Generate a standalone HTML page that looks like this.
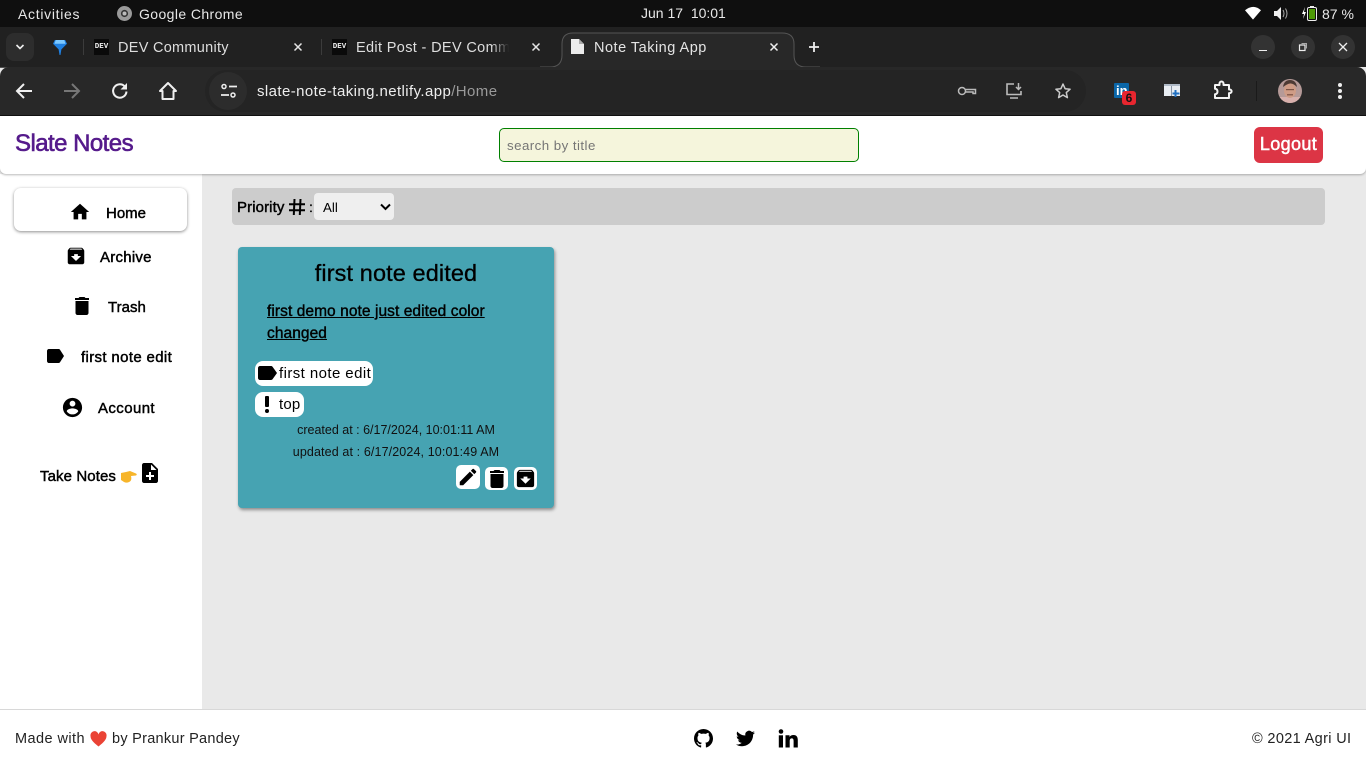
<!DOCTYPE html>
<html><head><meta charset="utf-8"><title>Note Taking App</title>
<style>
html,body{margin:0;padding:0;width:1366px;height:768px;overflow:hidden;background:#e9e9e9;font-family:"Liberation Sans",sans-serif;color:#000}
.a{position:absolute}
.t{position:absolute;white-space:nowrap}
svg{position:absolute;display:block}
.m{font-size:15px;-webkit-text-stroke:.45px #000}
.s{color:#111;font-size:12.5px}
.wb{position:absolute;background:#fff;border-radius:5px}
.tab{font-size:14.5px;color:#dedede}
.ft{font-size:14.5px;color:#222}
</style></head><body>
<!-- system bar -->
<div class="a" style="left:0;top:0;width:1366px;height:27px;background:#0f0f0f"></div>
<div class="t" style="left:18px;top:6px;font-size:14px;color:#e8e8e8;letter-spacing:.7px">Activities</div>
<svg style="left:117px;top:6px" width="15" height="15" viewBox="0 0 15 15"><circle cx="7.5" cy="7.5" r="7.5" fill="#9a9a9a"/><circle cx="7.5" cy="7.5" r="3.6" fill="#333"/><circle cx="7.5" cy="7.5" r="2" fill="#bbb"/></svg>
<div class="t" style="left:139px;top:6px;font-size:14px;color:#e8e8e8;letter-spacing:.4px">Google Chrome</div>
<div class="t" style="left:641px;top:5px;font-size:14px;color:#e8e8e8">Jun 17&nbsp; 10:01</div>
<svg style="left:1245px;top:6px" width="16" height="15" viewBox="0 0 17 15"><path d="M0 4Q9-3 17 4L8.500 14z" fill="#fff"/></svg>
<svg style="left:1273px;top:6px" width="16" height="15" viewBox="0 0 16 15"><path d="M1 5h3l4-4v13l-4-4H1z" fill="#eee"/><path d="M10 4q2 3.500 0 7M12.500 2.500q3 5 0 10" fill="none" stroke="#aaa" stroke-width="1"/></svg>
<svg style="left:1301px;top:5px" width="18" height="17" viewBox="0 0 18 17"><path d="M4 2 1 9h2l-1 5 3-7H3z" fill="#fff"/><rect x="6.500" y="2.500" width="9" height="13" rx="1.500" fill="none" stroke="#eee"/><rect x="8" y="4" width="6" height="10" fill="#4d9a06"/><rect x="9" y="1" width="4" height="1.500" fill="#eee"/></svg>
<div class="t" style="left:1322px;top:6px;font-size:14px;color:#e8e8e8">87 %</div>
<!-- tab strip -->
<div class="a" style="left:0;top:27px;width:1366px;height:40px;background:#212121"></div>
<div class="a" style="left:6px;top:33px;width:28px;height:28px;background:#2d2d2d;border-radius:8px"></div>
<svg style="left:15px;top:44px" width="10" height="7" viewBox="0 0 10 7"><path d="M1.500 1 5 4.500 8.500 1" fill="none" stroke="#eee" stroke-width="1.600"/></svg>
<svg style="left:53px;top:40px" width="14" height="15" viewBox="0 0 15 16"><path d="M2 0h11l2 4-6 6-1 6H7l-1-6-6-6z" fill="#1f7fe0"/><path d="M3 0h9l1.500 4H1.500z" fill="#7cc8ff"/></svg>
<div class="a" style="left:83px;top:39px;width:1px;height:16px;background:#3c3c3c"></div>
<div class="a" style="left:94px;top:39px;width:15px;height:16px;background:#0a0a0a"></div>
<div class="t" style="left:94px;top:43px;width:15px;text-align:center;font:700 7.500px 'Liberation Mono',monospace;color:#eee">DEV</div>
<div class="t tab" style="left:118px;top:40px;letter-spacing:.28px">DEV Community</div>
<svg style="left:293px;top:42px" width="10" height="10" viewBox="0 0 10 10"><path d="M1.500 1.500l7 7M8.500 1.500l-7 7" stroke="#e4e4e4" stroke-width="1.500"/></svg>
<div class="a" style="left:321px;top:39px;width:1px;height:16px;background:#3c3c3c"></div>
<div class="a" style="left:332px;top:39px;width:15px;height:16px;background:#0a0a0a"></div>
<div class="t" style="left:332px;top:43px;width:15px;text-align:center;font:700 7.500px 'Liberation Mono',monospace;color:#eee">DEV</div>
<div class="a" style="left:356px;top:36px;width:153px;height:24px;overflow:hidden"><div class="t tab" style="left:0;top:4px;letter-spacing:.35px">Edit Post - DEV Community</div></div>
<div class="a" style="left:491px;top:36px;width:18px;height:24px;background:linear-gradient(90deg,rgba(33,33,33,0),#212121)"></div>
<svg style="left:531px;top:42px" width="10" height="10" viewBox="0 0 10 10"><path d="M1.500 1.500l7 7M8.500 1.500l-7 7" stroke="#e4e4e4" stroke-width="1.500"/></svg>
<!-- active tab -->
<svg style="left:540px;top:32px" width="280" height="36" viewBox="0 0 280 36"><path d="M0 35h10q12 0 12-12V12Q22 1 33 1H242q12 0 12 11V23q0 12 12 12H280" fill="#282828" stroke="#555" stroke-width="1"/></svg>
<div class="a" style="left:0;top:66.500px;width:545px;height:1px;background:#555"></div>
<div class="a" style="left:815px;top:66.500px;width:541px;height:1px;background:#555"></div>
<svg style="left:571px;top:39px" width="13" height="15" viewBox="0 0 13 15"><path d="M0 0h8l5 5v10H0z" fill="#ececec"/><path d="M8 0v5h5" fill="#aaa"/></svg>
<div class="t" style="left:594px;top:40px;font-size:14.500px;color:#e4e4e4;letter-spacing:.5px">Note Taking App</div>
<svg style="left:769px;top:42px" width="10" height="10" viewBox="0 0 10 10"><path d="M1.500 1.500l7 7M8.500 1.500l-7 7" stroke="#eee" stroke-width="1.500"/></svg>
<svg style="left:808px;top:41px" width="12" height="12" viewBox="0 0 12 12"><path d="M6 1v10M1 6h10" stroke="#eee" stroke-width="1.800"/></svg>
<div class="a" style="left:1251px;top:35px;width:24px;height:24px;border-radius:50%;background:#333"></div>
<div class="a" style="left:1259px;top:49.500px;width:8px;height:1.500px;background:#eee"></div>
<div class="a" style="left:1291px;top:35px;width:24px;height:24px;border-radius:50%;background:#333"></div>
<svg style="left:1298px;top:42px" width="10" height="10" viewBox="0 0 10 10"><rect x="1.500" y="3" width="5.500" height="5.500" fill="none" stroke="#eee" stroke-width="1.200"/><path d="M3.500 1.500H8.500V6.500" fill="none" stroke="#aaa"/></svg>
<div class="a" style="left:1331px;top:35px;width:24px;height:24px;border-radius:50%;background:#333"></div>
<svg style="left:1338px;top:42px" width="10" height="10" viewBox="0 0 10 10"><path d="M1 1l8 8M9 1l-8 8" stroke="#eee" stroke-width="1.300"/></svg>
<!-- toolbar -->
<div class="a" style="left:0;top:67px;width:1366px;height:48px;background:#282828;border-radius:9px 9px 0 0"></div>
<div class="a" style="left:0;top:115px;width:1366px;height:1px;background:#111"></div>
<svg style="left:15px;top:82px" width="18" height="18" viewBox="0 0 18 18"><path d="M17 9H2M9 2 2 9l7 7" fill="none" stroke="#f0f0f0" stroke-width="2"/></svg>
<svg style="left:63px;top:82px" width="18" height="18" viewBox="0 0 18 18"><path d="M1 9h15M9 2l7 7-7 7" fill="none" stroke="#777" stroke-width="2"/></svg>
<svg style="left:111px;top:82px" width="18" height="18" viewBox="0 0 18 18"><path d="M15.500 9.500A6.700 6.700 0 1 1 13.500 4.200" fill="none" stroke="#f0f0f0" stroke-width="2"/><path d="M16 1v6.500h-6.500z" fill="#f0f0f0"/></svg>
<svg style="left:158px;top:81px" width="20" height="20" viewBox="0 0 20 20"><path d="M10 2 2 10h2.500v8h11v-8H18z" fill="none" stroke="#f0f0f0" stroke-width="2" stroke-linejoin="round"/></svg>
<div class="a" style="left:205px;top:70px;width:881px;height:42px;background:#242424;border-radius:21px"></div>
<div class="a" style="left:209px;top:72px;width:38px;height:38px;background:#2c2c2c;border-radius:50%"></div>
<svg style="left:220px;top:83px" width="18" height="16" viewBox="0 0 18 16"><circle cx="4" cy="3.500" r="2" fill="none" stroke="#eee" stroke-width="1.500"/><path d="M9 3.500h8M1 12h8" stroke="#eee" stroke-width="1.800"/><circle cx="13" cy="12" r="2" fill="none" stroke="#eee" stroke-width="1.500"/></svg>
<div class="t" style="left:257px;top:83px;font-size:15px;color:#eee;letter-spacing:.41px">slate-note-taking.netlify.app<span style="color:#9a9a9a">/Home</span></div>
<svg style="left:957px;top:84px" width="20" height="14" viewBox="0 0 20 14"><circle cx="5" cy="7" r="3.500" fill="none" stroke="#bbb" stroke-width="1.500"/><path d="M8.500 5.500h10v4h-2.500V8H8.500" fill="none" stroke="#bbb" stroke-width="1.500"/></svg>
<svg style="left:1005px;top:82px" width="20" height="18" viewBox="0 0 20 18"><path d="M9 2H2v10.500h14V9M5 16h8" fill="none" stroke="#bbb" stroke-width="1.600"/><path d="M13.500 1v6M11 5l2.500 2.500L16 5" fill="none" stroke="#bbb" stroke-width="1.500"/></svg>
<svg style="left:1054px;top:82px" width="18" height="18" viewBox="0 0 18 18"><path d="M9 2l2.100 4.700 5 .5-3.800 3.400 1.100 5L9 13l-4.400 2.600 1.100-5L1.900 7.200l5-.5z" fill="none" stroke="#ccc" stroke-width="1.500" stroke-linejoin="round"/></svg>
<div class="a" style="left:1114px;top:83px;width:15px;height:15px;background:#0a66a8;border-radius:1px"></div>
<div class="t" style="left:1116px;top:83px;font:700 13px 'Liberation Sans',sans-serif;color:#fff">in</div>
<div class="a" style="left:1122px;top:91px;width:14px;height:14px;background:#e8262f;border-radius:3px"></div>
<div class="t" style="left:1122px;top:91px;width:14px;text-align:center;font:700 12px 'Liberation Sans',sans-serif;color:#111">6</div>
<svg style="left:1163px;top:83px" width="19" height="16" viewBox="0 0 19 16"><rect x="1" y="1" width="16" height="12" fill="#e8edf2"/><rect x="8" y="1" width="1" height="12" fill="#8a97a8"/><path d="M1 1h16v2H1z" fill="#aeb9c6"/><path d="M12.500 7v7M9.500 10.500h7" stroke="#1f6fc0" stroke-width="2"/></svg>
<svg style="left:1212px;top:80px" width="21" height="20" viewBox="0 0 21 20"><path d="M3 5h4.500V3.500a2 2 0 0 1 4 0V5H17v4.500h.8a1.800 1.800 0 0 1 0 3.600H17V18H3v-3.700q2.500-.3 2.500-2.800T3 8.700z" fill="none" stroke="#f4f4f4" stroke-width="2" stroke-linejoin="round"/></svg>
<div class="a" style="left:1256px;top:81px;width:1px;height:20px;background:#1a1a1a"></div>
<svg style="left:1278px;top:79px" width="24" height="24" viewBox="0 0 24 24"><defs><clipPath id="av"><circle cx="12" cy="12" r="12"/></clipPath></defs><g clip-path="url(#av)"><rect width="24" height="24" fill="#b59a98"/><rect y="18" width="24" height="6" fill="#d8b0ac"/><ellipse cx="12" cy="11.500" rx="6" ry="7.500" fill="#cf9c86"/><path d="M5 8Q6 1 12 1t7 7Q15 4 12 4.500T5 8z" fill="#4d3a34"/><rect x="8" y="10" width="8" height="1.200" fill="#7b5345"/><rect x="9" y="15" width="6" height="1.500" fill="#8d5f50"/></g></svg>
<div class="a" style="left:1338px;top:83px;width:4px;height:4px;border-radius:50%;background:#eee"></div>
<div class="a" style="left:1338px;top:89px;width:4px;height:4px;border-radius:50%;background:#eee"></div>
<div class="a" style="left:1338px;top:95px;width:4px;height:4px;border-radius:50%;background:#eee"></div>

<!-- page -->
<div class="a" style="left:0;top:116px;width:1366px;height:594px;background:#e9e9e9"></div>
<div class="a" style="left:0;top:174px;width:202px;height:536px;background:#fff"></div>
<div class="a" style="left:0;top:116px;width:1366px;height:58px;background:#fff;border-radius:0 0 6px 6px;box-shadow:0 1px 2px rgba(0,0,0,.28)"></div>
<div class="t" style="left:15px;top:130px;font-size:24px;color:#551a8b;letter-spacing:-.55px;-webkit-text-stroke:.6px #551a8b">Slate Notes</div>
<div class="a" style="left:499px;top:128px;width:358px;height:32px;background:#f5f5dc;border:1px solid #008000;border-radius:5px"></div>
<div class="t" style="left:507px;top:138px;font-size:13.300px;color:#757575;letter-spacing:.45px">search by title</div>
<div class="a" style="left:1254px;top:127px;width:69px;height:36px;background:#dc3545;border-radius:6px"></div>
<div class="t" style="left:1254px;top:134px;width:69px;text-align:center;font-size:18px;color:#fff;letter-spacing:.35px;-webkit-text-stroke:.5px #fff">Logout</div>

<!-- sidebar -->
<div class="a" style="left:14px;top:188px;width:173px;height:43px;background:#fff;border-radius:7px;box-shadow:0 1px 3px rgba(0,0,0,.45)"></div>
<svg style="left:69px;top:201px" width="22" height="22" viewBox="0 0 24 24"><path d="M10 20v-6h4v6h5v-8h3L12 3 2 12h3v8z"/></svg>
<div class="t m" style="left:106px;top:205px">Home</div>
<svg style="left:65px;top:245px" width="22" height="22" viewBox="0 0 24 24"><path d="M20.540 5.230l-1.390-1.680C18.880 3.210 18.470 3 18 3H6c-.47 0-.88.21-1.160.55L3.460 5.230C3.170 5.570 3 6.020 3 6.500V19c0 1.100.9 2 2 2h14c1.100 0 2-.9 2-2V6.500c0-.48-.17-.93-.46-1.270zM12 17.500L6.500 12H10v-2h4v2h3.500L12 17.500zM5.120 5l.81-1h12l.94 1H5.120z"/></svg>
<div class="t m" style="left:100px;top:249px;letter-spacing:.25px">Archive</div>
<svg style="left:70px;top:294px" width="24" height="24" viewBox="0 0 24 24"><path d="M5.500 7h13v12c0 1.100-.9 2-2 2h-9c-1.100 0-2-.9-2-2zM19 4h-3.500l-1-1h-5l-1 1H5v2h14z"/></svg>
<div class="t m" style="left:108px;top:299px">Trash</div>
<svg style="left:47px;top:349px" width="17" height="14" viewBox="3 5 19 14" preserveAspectRatio="none"><path d="M17.630 5.840C17.270 5.330 16.670 5 16 5L5 5.010C3.900 5.010 3 5.900 3 7v10c0 1.100.9 1.990 2 1.990L16 19c.67 0 1.270-.33 1.630-.84L22 12l-4.370-6.160z"/></svg>
<div class="t m" style="left:81px;top:349px;letter-spacing:.35px">first note edit</div>
<svg style="left:61px;top:396px" width="23" height="23" viewBox="0 0 24 24"><path d="M12 2C6.480 2 2 6.480 2 12s4.480 10 10 10 10-4.480 10-10S17.520 2 12 2zm0 3c1.660 0 3 1.340 3 3s-1.340 3-3 3-3-1.340-3-3 1.340-3 3-3zm0 14.200c-2.500 0-4.710-1.280-6-3.220.03-1.990 4-3.080 6-3.080 1.990 0 5.970 1.090 6 3.080-1.290 1.940-3.500 3.220-6 3.220z"/></svg>
<div class="t m" style="left:98px;top:400px;letter-spacing:.4px">Account</div>
<div class="t m" style="left:40px;top:468px;letter-spacing:.1px">Take Notes</div>
<svg style="left:121px;top:470px" width="16" height="14" viewBox="0 0 16 14"><path d="M0 3 5 2 9 1l6 2.500Q16.500 4.500 15 5.500L10 6q1 4-1 5.500-3 2-6 .5L0 10z" fill="#f7b52a"/></svg>
<svg style="left:138px;top:461px" width="24" height="24" viewBox="0 0 24 24"><path d="M14 2H6c-1.100 0-1.990.9-1.990 2L4 20c0 1.100.89 2 1.990 2H18c1.100 0 2-.9 2-2V8l-6-6zm2 14h-3v3h-2v-3H8v-2h3v-3h2v3h3v2zm-3-7V3.500L18.500 9H13z"/></svg>

<!-- priority bar -->
<div class="a" style="left:232px;top:188px;width:1093px;height:37px;background:#ccc;border-radius:4px"></div>
<div class="t m" style="left:237px;top:199px;letter-spacing:.1px">Priority</div>
<svg style="left:289px;top:199px" width="16" height="16" viewBox="0 0 16 16"><path d="M5.500 0 4.800 16M11.500 0 10.800 16M0 5.200h16M0 11.200h16" stroke="#000" stroke-width="2" fill="none"/></svg>
<div class="t" style="left:309px;top:199px;font-size:14px;-webkit-text-stroke:.3px #000">:</div>
<div class="a" style="left:314px;top:193px;width:80px;height:27px;background:#efefef;border-radius:4px"></div>
<div class="t" style="left:323px;top:200px;font-size:13.300px">All</div>
<svg style="left:380px;top:203px" width="11" height="8" viewBox="0 0 11 8"><path d="M1 1.500 5.500 6 10 1.500" fill="none" stroke="#000" stroke-width="2"/></svg>

<!-- card -->
<div class="a" style="left:238px;top:247px;width:316px;height:261px;background:#46a3b2;border-radius:4px;box-shadow:1px 2px 3px rgba(0,0,0,.4)"></div>
<div class="t" style="left:238px;top:260px;width:316px;text-align:center;font-size:23.500px;color:#000;letter-spacing:.1px;-webkit-text-stroke:.3px #000">first note edited</div>
<div class="t" style="left:267px;top:301px;font-size:15.500px;line-height:22px;text-decoration:underline;-webkit-text-stroke:.4px #000;letter-spacing:.07px">first demo note just edited color<br>changed</div>
<div class="a" style="left:255px;top:361px;width:118px;height:25px;background:#fff;border-radius:8px"></div>
<svg style="left:258px;top:366px" width="19" height="14" viewBox="3 5 19 14" preserveAspectRatio="none"><path d="M17.630 5.840C17.270 5.330 16.670 5 16 5L5 5.010C3.900 5.010 3 5.900 3 7v10c0 1.100.9 1.990 2 1.990L16 19c.67 0 1.270-.33 1.630-.84L22 12l-4.370-6.160z"/></svg>
<div class="t" style="left:279px;top:365px;font-size:15px;letter-spacing:.42px">first note edit</div>
<div class="a" style="left:255px;top:392px;width:49px;height:25px;background:#fff;border-radius:8px"></div>
<div class="a" style="left:265px;top:396px;width:4px;height:11px;background:#000;border-radius:1px"></div>
<div class="a" style="left:265px;top:409px;width:4px;height:4px;background:#000;border-radius:50%"></div>
<div class="t" style="left:279px;top:396px;font-size:15px;letter-spacing:.2px">top</div>
<div class="t s" style="left:238px;top:423px;width:316px;text-align:center">created at : 6/17/2024, 10:01:11 AM</div>
<div class="t s" style="left:238px;top:445px;width:316px;text-align:center;letter-spacing:.12px">updated at : 6/17/2024, 10:01:49 AM</div>
<div class="wb" style="left:456px;top:465px;width:24px;height:24px"></div>
<svg style="left:457px;top:466px" width="22" height="22" viewBox="0 0 24 24"><path d="M3 17.250V21h3.750L17.810 9.940l-3.750-3.750L3 17.250zM20.710 7.040c.39-.39.39-1.020 0-1.410l-2.340-2.340c-.39-.39-1.020-.39-1.410 0l-1.830 1.830 3.750 3.750 1.830-1.830z"/></svg>
<div class="wb" style="left:485px;top:467px;width:23px;height:23px"></div>
<svg style="left:485px;top:467px" width="24" height="24" viewBox="0 0 24 24"><path d="M5.500 7h13v12c0 1.100-.9 2-2 2h-9c-1.100 0-2-.9-2-2zM19 4h-3.500l-1-1h-5l-1 1H5v2h14z"/></svg>
<div class="wb" style="left:514px;top:467px;width:23px;height:23px"></div>
<svg style="left:514px;top:467px" width="23" height="23" viewBox="0 0 24 24"><path d="M20.540 5.230l-1.390-1.680C18.880 3.210 18.470 3 18 3H6c-.47 0-.88.21-1.160.55L3.460 5.230C3.170 5.570 3 6.020 3 6.500V19c0 1.100.9 2 2 2h14c1.100 0 2-.9 2-2V6.500c0-.48-.17-.93-.46-1.270zM12 17.500L6.500 12H10v-2h4v2h3.500L12 17.500zM5.120 5l.81-1h12l.94 1H5.120z"/></svg>

<!-- footer -->
<div class="a" style="left:0;top:709px;width:1366px;height:59px;background:#fff;border-top:1px solid #d8d8d8;box-sizing:border-box"></div>
<div class="t ft" style="left:15px;top:731px;letter-spacing:.43px">Made with</div>
<svg style="left:90px;top:731px" width="17" height="16" viewBox="0 0 17 16"><path d="M8.500 15.500C3 11 .5 8.500.5 5A4 4 0 0 1 8.500 3.500 4 4 0 0 1 16.500 5c0 3.500-2.500 6-8 10.500z" fill="#ea4335"/></svg>
<div class="t ft" style="left:112px;top:731px;letter-spacing:.27px">by Prankur Pandey</div>
<svg style="left:694px;top:729px" width="19" height="19" viewBox="0 0 16 16"><path d="M8 0C3.580 0 0 3.580 0 8c0 3.540 2.290 6.530 5.470 7.590.4.070.55-.17.55-.38 0-.19-.01-.82-.01-1.490-2.010.37-2.530-.49-2.690-.94-.09-.23-.48-.94-.82-1.130-.28-.15-.68-.52-.01-.53.63-.01 1.080.58 1.230.82.72 1.210 1.870.87 2.330.66.07-.52.28-.87.51-1.070-1.780-.2-3.640-.89-3.640-3.950 0-.87.31-1.590.82-2.150-.08-.2-.36-1.020.08-2.120 0 0 .67-.21 2.200.82.64-.18 1.320-.27 2-.27s1.360.09 2 .27c1.530-1.040 2.200-.82 2.200-.82.44 1.100.16 1.920.08 2.120.51.56.82 1.270.82 2.150 0 3.070-1.870 3.750-3.650 3.950.29.25.54.73.54 1.480 0 1.070-.01 1.930-.01 2.200 0 .21.15.46.55.38A8.013 8.013 0 0 0 16 8c0-4.420-3.580-8-8-8z"/></svg>
<svg style="left:736px;top:729px" width="19" height="19" viewBox="0 0 24 24"><path d="M23.950 4.570a10 10 0 0 1-2.820.77 4.960 4.960 0 0 0 2.160-2.720c-.95.55-2 .95-3.120 1.180a4.920 4.920 0 0 0-8.380 4.480C7.690 8.090 4.070 6.130 1.640 3.160a4.820 4.820 0 0 0-.67 2.480c0 1.710.87 3.200 2.180 4.100a4.900 4.900 0 0 1-2.230-.62v.06a4.920 4.920 0 0 0 3.950 4.830 5 5 0 0 1-2.210.08 4.940 4.940 0 0 0 4.600 3.420A9.870 9.870 0 0 1 0 19.540a14 14 0 0 0 7.560 2.210c9.050 0 14-7.500 14-13.980 0-.21 0-.42-.02-.63a9.940 9.940 0 0 0 2.460-2.550z"/></svg>
<svg style="left:778px;top:729px" width="20" height="19" viewBox="0 0 20 19"><circle cx="3" cy="2.500" r="2.300"/><rect x=".8" y="6.300" width="4.200" height="12.200"/><path d="M7.500 6.300h4v1.700c.7-1.200 2.200-2 4-2 3.300 0 4.300 2.100 4.300 5.300v7.200h-4.200v-6.400c0-1.600-.4-2.700-1.800-2.700-1.500 0-2.100 1.100-2.100 2.700v6.400H7.500z"/></svg>
<div class="t ft" style="left:1252px;top:731px;letter-spacing:.35px">© 2021 Agri UI</div>
</body></html>
